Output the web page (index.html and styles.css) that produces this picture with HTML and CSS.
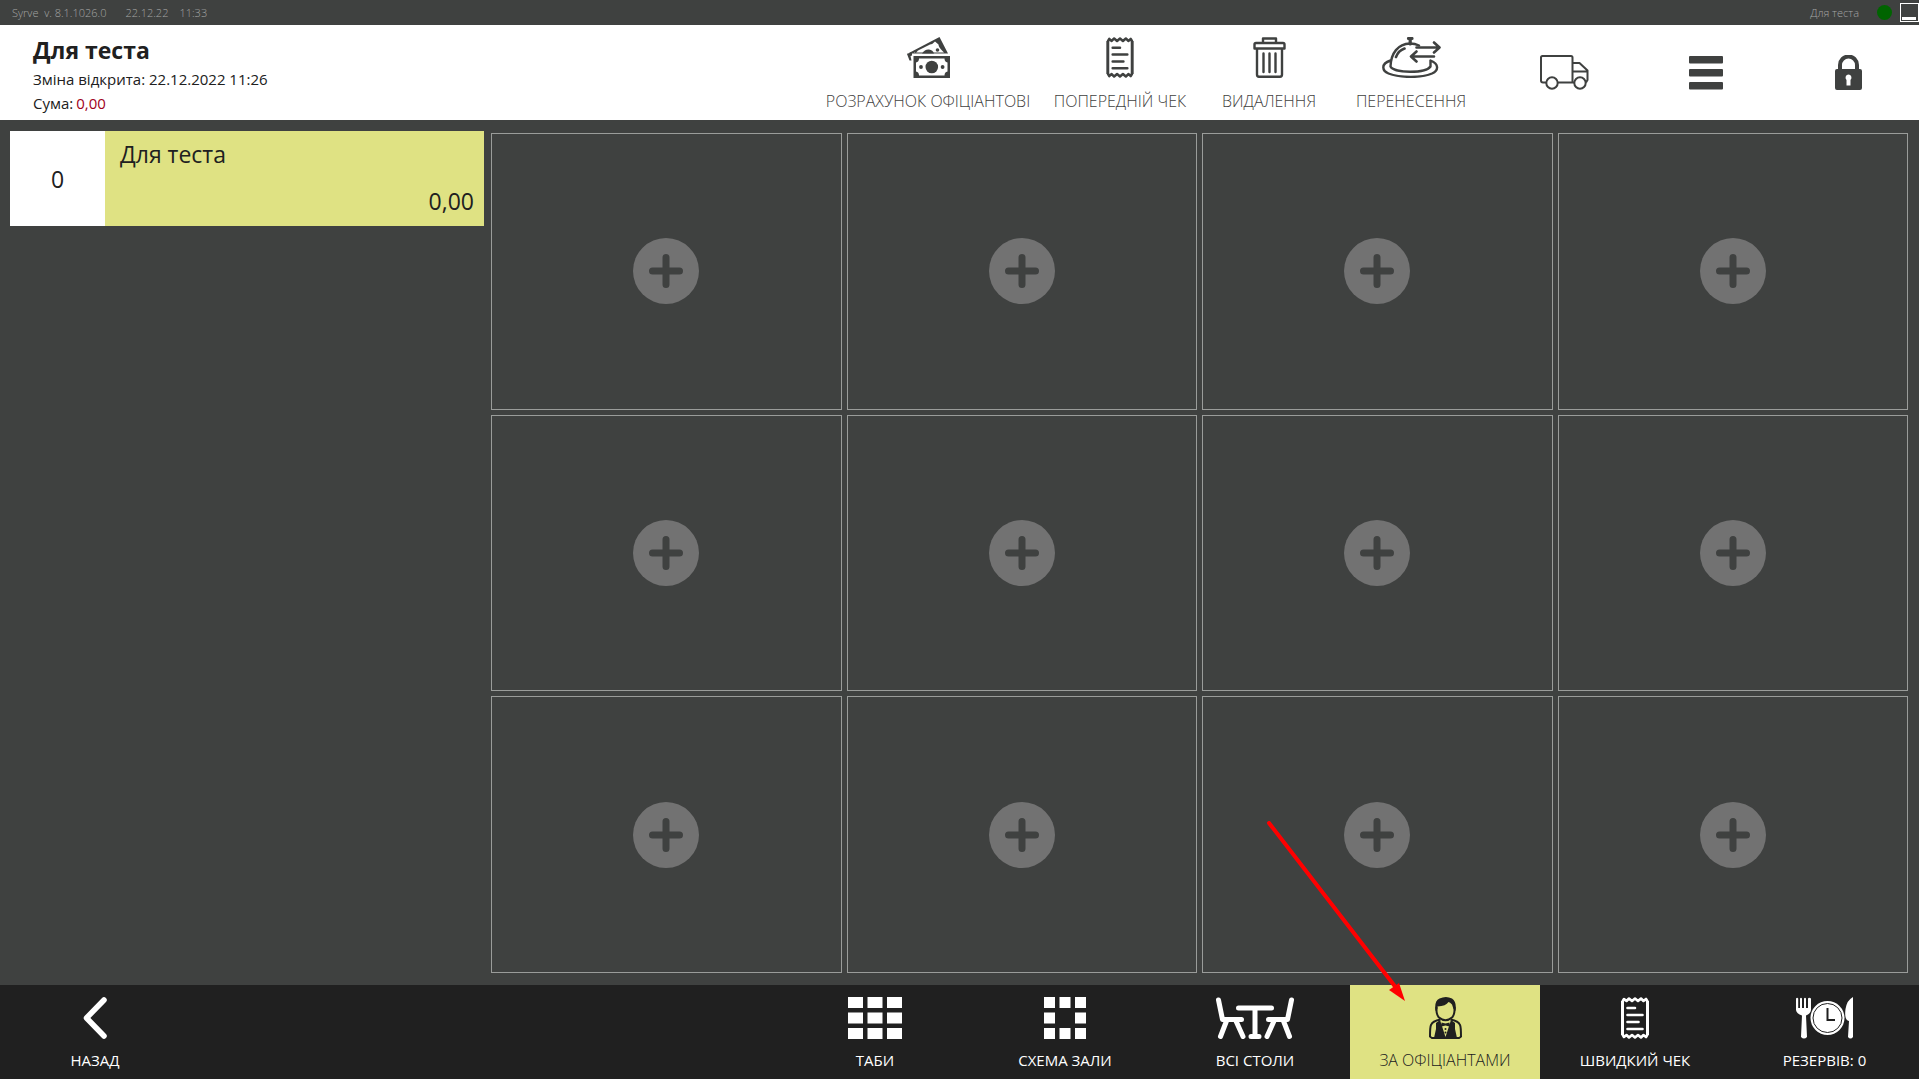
FILE: index.html
```html
<!DOCTYPE html>
<html lang="uk">
<head>
<meta charset="utf-8">
<title>Syrve</title>
<meta name="viewport" content="width=device-width, initial-scale=1">
<link rel="stylesheet" href="styles.css">
</head>
<body>
<svg class="sprite" aria-hidden="true">
  <symbol id="receipt" viewBox="0 0 28 42">
    <path d="M1.500 4v34M26.500 4v34" fill="none" stroke="currentColor" stroke-width="3"/>
    <path d="M1.500 4.500L3 2l2.500 2L8 1.500l3 2.500 3-2.500L17 4l3-2.500L22.500 4 25 2l1.500 2.500M1.500 37.500L3 40l2.500-2L8 40.500l3-2.500 3 2.500 3-2.500 3 2.500 2.500-2.500L25 40l1.500-2.500" fill="none" stroke="currentColor" stroke-width="2.600" stroke-linejoin="round"/>
    <path d="M6.500 11H14M6.500 18h15M6.500 25h11M6.500 32h15" fill="none" stroke="currentColor" stroke-width="2.600" stroke-linecap="round"/>
  </symbol>
  <symbol id="plus" viewBox="0 0 66 66">
    <circle cx="33" cy="33" r="33" fill="#727272"/>
    <path d="M33 19.500v27M19.500 33h27" stroke="#3f4140" stroke-width="7" stroke-linecap="round"/>
  </symbol>
</svg>

<div class="status">
  <span class="version">Syrve&nbsp; v. 8.1.1026.0</span>
  <span class="date">22.12.22</span>
  <span>11:33</span>
  <span class="user">Для теста</span>
  <span class="online"></span>
  <button class="minimize" aria-label="Згорнути"></button>
</div>

<header class="header">
  <div class="shift">
    <h1>Для теста</h1>
    <p>Зміна відкрита: 22.12.2022 11:26</p>
    <p>Сума:<span class="sum">0,00</span></p>
  </div>
  <nav class="tools">
    <button class="tool tool-widest">
      <svg width="43" height="41" viewBox="0 0 43 41">
        <path fill="currentColor" fill-rule="evenodd" d="M0 17L32.500 0 41 16.500H0zM7 15.500H37L35 13.500Q31.500 10 31.500 7.500L28 4.500Q26 7 23 7.500L11 13.500Q10 15.500 7 16z"/>
        <path fill="currentColor" d="M0 17L5 15V18.500L3.500 19 4.500 23.500H2.500z"/>
        <path fill="currentColor" d="M15 16.500Q18 12 22 12.500 26 13 27 16.500z"/>
        <circle cx="30.500" cy="13" r="1.800" fill="currentColor"/>
        <path fill="currentColor" fill-rule="evenodd" d="M6.500 19H43v22H6.500zM12 21.500Q12 25 9 25.500V34.500Q12 35 12 38.500H37.500Q37.500 35 40.500 34.500V25.500Q37.500 25 37.500 21.500z"/>
        <circle cx="24.800" cy="30" r="6.300" fill="currentColor"/>
        <circle cx="14" cy="30" r="1.900" fill="currentColor"/><circle cx="35.600" cy="30" r="1.900" fill="currentColor"/>
      </svg>
      <span>РОЗРАХУНОК ОФІЦІАНТОВІ</span>
    </button>
    <button class="tool tool-wide">
      <svg width="28" height="41"><use href="#receipt"/></svg>
      <span>ПОПЕРЕДНІЙ ЧЕК</span>
    </button>
    <button class="tool">
      <svg width="33" height="41" viewBox="0 0 33 41" fill="none" stroke="currentColor" stroke-width="2.400" stroke-linejoin="round" stroke-linecap="round">
        <path d="M10 6V1.500H23V6M1.500 11.500V7.500Q1.500 6 3 6H30Q31.500 6 31.500 7.500V11.500zM4 12V37.500Q4 39.700 6 39.700H27Q29 39.700 29 37.500V12M10.500 16.500V35M16.500 16.500V35M22.500 16.500V35"/>
      </svg>
      <span>ВИДАЛЕННЯ</span>
    </button>
    <button class="tool">
      <svg width="59" height="41" viewBox="0 0 59 41" fill="none" stroke="currentColor" stroke-width="2.400" stroke-linecap="round" stroke-linejoin="round">
        <path d="M26.500 1.500h3.500M28.200 2v5" stroke-width="3.200"/>
        <path d="M37 8.500Q33 6.500 28 6.500C16 7 9 16 8.500 29.500 12 36.500 44 36.500 48.500 29.500V24M8.500 23.500C-2 27 .5 34 6.500 36.500 18 41 40 41 50 36.500 57 33 57 27 48.500 23.500"/>
        <path d="M14 20Q16.500 13.500 22.500 11.500M34.500 10.500H57M52 5.500L57.500 10.500 52 15.500M52 19.500H29.500M34.500 14.500L29 19.500 34.500 24.500" stroke-width="2.600"/>
      </svg>
      <span>ПЕРЕНЕСЕННЯ</span>
    </button>
    <button class="tool tool-apart" aria-label="Доставка">
      <svg width="49" height="35" viewBox="0 0 49 35" fill="none" stroke="currentColor" stroke-width="2" stroke-linejoin="round">
        <path d="M6.500 27.500H3Q1 27.500 1 25.500V2.500Q1 1 2.500 1H31Q32.500 1 32.500 2.500V27.500M18 27.500H34.500M32.500 8H39.500L47.500 15.500V25L46 27.500M32.500 16.500H47.500"/>
        <circle cx="12" cy="28" r="5.700"/><circle cx="40" cy="28" r="5.700"/>
      </svg>
    </button>
    <button class="tool" aria-label="Меню">
      <svg width="34" height="34" viewBox="0 0 34 34" fill="currentColor"><rect width="34" height="7.500" rx="1"/><rect y="13" width="34" height="7.500" rx="1"/><rect y="26" width="34" height="7.500" rx="1"/></svg>
    </button>
    <button class="tool" aria-label="Заблокувати">
      <svg width="27" height="35" viewBox="0 0 27 35">
        <path d="M5 15V10a8.500 8.500 0 0 1 17 0v5" fill="none" stroke="currentColor" stroke-width="4"/>
        <path fill="currentColor" fill-rule="evenodd" d="M2 14H25Q27 14 27 16V33Q27 35 25 35H2Q0 35 0 33V16Q0 14 2 14zM13.500 19.500a3.200 3.200 0 0 0-2 5.500V30.500H15.500V25a3.200 3.200 0 0 0-2-5.500z"/>
      </svg>
    </button>
  </nav>
</header>

<main class="main">
  <aside class="waiters">
    <button class="waiter">
      <span class="count">0</span>
      <span class="name">Для теста</span>
      <span class="total">0,00</span>
    </button>
  </aside>
  <section class="orders">
    <button class="slot" aria-label="Додати замовлення"><svg><use href="#plus"/></svg></button>
    <button class="slot" aria-label="Додати замовлення"><svg><use href="#plus"/></svg></button>
    <button class="slot" aria-label="Додати замовлення"><svg><use href="#plus"/></svg></button>
    <button class="slot" aria-label="Додати замовлення"><svg><use href="#plus"/></svg></button>
    <button class="slot" aria-label="Додати замовлення"><svg><use href="#plus"/></svg></button>
    <button class="slot" aria-label="Додати замовлення"><svg><use href="#plus"/></svg></button>
    <button class="slot" aria-label="Додати замовлення"><svg><use href="#plus"/></svg></button>
    <button class="slot" aria-label="Додати замовлення"><svg><use href="#plus"/></svg></button>
    <button class="slot" aria-label="Додати замовлення"><svg><use href="#plus"/></svg></button>
    <button class="slot" aria-label="Додати замовлення"><svg><use href="#plus"/></svg></button>
    <button class="slot" aria-label="Додати замовлення"><svg><use href="#plus"/></svg></button>
    <button class="slot" aria-label="Додати замовлення"><svg><use href="#plus"/></svg></button>
  </section>
</main>

<footer class="footer">
  <button class="tab back">
    <svg width="24" height="42" viewBox="0 0 24 42"><path d="M21 3L3.500 21 21 39" fill="none" stroke="currentColor" stroke-width="5.500" stroke-linecap="round" stroke-linejoin="round"/></svg>
    <span>НАЗАД</span>
  </button>
  <button class="tab">
    <svg width="54" height="42" viewBox="0 0 54 42"><path fill="currentColor" d="M0 0h15v11H0zM19.500 0h15v11h-15zM39 0h15v11H39zM0 15.500h15v11H0zM19.500 15.500h15v11h-15zM39 15.500h15v11H39zM0 31h15v11H0zM19.500 31h15v11h-15zM39 31h15v11H39z"/></svg>
    <span>ТАБИ</span>
  </button>
  <button class="tab">
    <svg width="42" height="42" viewBox="0 0 42 42"><path fill="currentColor" d="M0 0h11v11H0zM15.500 0h11v11h-11zM31 0h11v11H31zM0 15.500h11v11H0zM31 15.500h11v11H31zM0 31h11v11H0zM15.500 31h11v11h-11zM31 31h11v11H31z"/></svg>
    <span>СХЕМА ЗАЛИ</span>
  </button>
  <button class="tab">
    <svg width="78" height="42" viewBox="0 0 78 42" fill="none" stroke="currentColor" stroke-width="5" stroke-linecap="round" stroke-linejoin="round"><path d="M2.500 3L6.500 22.500H25.500M10.500 24L4.500 39.500M20 24L27 39.500M22.500 11H55.500M39 11V39M35 39.500H43M75.500 3L71.500 22.500H52.500M67.500 24L73.500 39.500M58 24L51 39.500"/></svg>
    <span>ВСІ СТОЛИ</span>
  </button>
  <button class="tab active">
    <svg width="33" height="42" viewBox="0 0 33 42">
      <path d="M7.500 10Q7 17.500 10 20.500 16.500 26 23 20.500 26 17.500 25.500 10" fill="none" stroke="currentColor" stroke-width="2"/>
      <path fill="currentColor" d="M6.500 14Q5 4 10.500 1.500 17-1.500 23 1.500 28 5 26.500 14L24.500 12 23 7.500Q21 5 19.500 5 17 9 8.500 9.500V12z"/>
      <path d="M11.500 22.500Q3.500 24 2 28 1 30 1 39.500L3 41H30L32 39.500Q32 30 31 28 29.500 24 21.500 22.500" fill="none" stroke="currentColor" stroke-width="2"/>
      <path fill="currentColor" d="M7 26L11 23 16.500 40 22 23 26 26V32L28 41H5L7 32zM12.500 25.500L16.500 26.500 20.500 25.500V29.500L16.500 28.500 12.500 29.500z"/>
      <circle cx="16.500" cy="32" r="1" fill="currentColor"/><circle cx="16.500" cy="35.500" r="1" fill="currentColor"/>
    </svg>
    <span>ЗА ОФІЦІАНТАМИ</span>
    <svg class="pointer" width="142" height="184" viewBox="0 0 142 184" aria-hidden="true"><path d="M2 2L130 168" stroke="#f00" stroke-width="4" stroke-linecap="round"/><path d="M138 180L122 169 132 162z" fill="#f00"/></svg>
  </button>
  <button class="tab">
    <svg width="28" height="42"><use href="#receipt"/></svg>
    <span>ШВИДКИЙ ЧЕК</span>
  </button>
  <button class="tab tab-last">
    <svg width="58" height="42" viewBox="0 0 58 42">
      <path fill="currentColor" d="M0 1.500Q1.200 0 2.200 1.500V11H4V1.500Q5 0 6 1.500V11H8V1.500Q9 0 10 1.500V11H12V1.500Q13 0 15 1.500V13Q14.500 16.500 10 18.500L11 40Q8 43 5 40L6 18.500Q.5 16.500 0 13zM57 0V40Q54.500 43 52 40L53 24Q48 23 49.500 12 51 3 57 0z"/>
      <circle cx="31.500" cy="21" r="17" fill="currentColor"/>
      <circle cx="31.500" cy="21" r="14.500" fill="none" stroke="#202020" stroke-width="1"/>
      <path d="M31.500 11V23H39" fill="none" stroke="#202020" stroke-width="2"/>
    </svg>
    <span>РЕЗЕРВІВ: 0</span>
  </button>
</footer>
</body>
</html>
```
FILE: styles.css
```css
* { box-sizing: border-box; }

body {
  margin: 0;
  min-height: 100vh;
  display: flex;
  flex-direction: column;
  background: #3f4140;
  color: #202020;
  font-family: "Open Sans", "Noto Sans", sans-serif;
  font-size: 15px;
}

button {
  margin: 0;
  padding: 0;
  border: 0;
  background: none;
  color: inherit;
  font: inherit;
  cursor: pointer;
}

.sprite { display: none; }

/* status line */
.status {
  height: 25px;
  padding-left: 12px;
  display: flex;
  align-items: center;
  color: #a4a5a4;
  font-size: 11px;
  font-weight: 300;
}
.date { margin: 0 11px 0 19px; }
.user { margin-left: auto; }
.online {
  width: 15px;
  height: 15px;
  margin: 0 8px 0 18px;
  border-radius: 50%;
  background: #006400;
}
.minimize {
  width: 19px;
  height: 19px;
  padding: 1px;
  display: flex;
  align-items: flex-end;
  border: 1px solid #fff;
}
.minimize::after {
  content: "";
  width: 14px;
  height: 3px;
  background: #fff;
}

/* header */
.header {
  height: 95px;
  display: flex;
  justify-content: space-between;
  background: #fff;
}
.shift { padding: 10px 0 0 33px; }
.shift h1 {
  margin: 0;
  font-size: 23px;
  line-height: 30px;
}
.shift p {
  margin: 0;
  line-height: 24px;
}
.shift h1 + p { margin-top: 2px; }
.sum {
  margin-left: 3px;
  color: #a00020;
}

.tools { display: flex; }
.tool {
  width: 142px;
  display: flex;
  flex-direction: column;
  align-items: center;
  justify-content: center;
  gap: 12px;
  color: #3f4140;
  font-size: 16px;
  font-weight: 300;
  line-height: 22px;
  white-space: nowrap;
}
.tool svg:not(:only-child) { margin-top: 4px; }
.tool-wide { width: 156px; }
.tool-widest { width: 228px; }
.tool-apart { margin-left: 11px; }

/* work area */
.main {
  flex: 1;
  display: flex;
  gap: 7px;
  padding: 11px 11px 12px 10px;
}
.waiters { width: 474px; }
.waiter {
  width: 100%;
  height: 95px;
  display: grid;
  grid-template-columns: 95px 1fr;
  grid-template-rows: 1fr 1fr;
  background: #dfe283;
  font-size: 23px;
}
.count {
  grid-row: 1 / 3;
  align-self: stretch;
  display: grid;
  place-items: center;
  background: #fff;
}
.name {
  padding: 0 0 2px 15px;
  align-self: center;
  text-align: left;
}
.total {
  padding: 0 10px 3px 0;
  align-self: center;
  text-align: right;
}
.orders {
  flex: 1;
  margin-top: 2px;
  display: grid;
  grid-template-columns: repeat(4, 1fr);
  grid-template-rows: repeat(3, 1fr);
  gap: 5px;
}
.slot {
  min-height: 100px;
  display: grid;
  place-items: center;
  border: 1px solid #9a9c9a;
}
.slot svg {
  width: 66px;
  height: 66px;
}

/* bottom bar */
.footer {
  height: 94px;
  display: flex;
  background: #202020;
  color: #fff;
}
.tab {
  position: relative;
  width: 190px;
  padding-top: 12px;
  display: flex;
  flex-direction: column;
  align-items: center;
  gap: 11px;
  line-height: 20px;
  white-space: nowrap;
}
.tab-last { width: 189px; }
.back { margin-right: auto; }
.active {
  background: #dfe283;
  color: #202020;
  font-size: 16px;
  font-weight: 300;
}
.pointer {
  position: absolute;
  left: -83px;
  top: -164px;
  pointer-events: none;
}
```
